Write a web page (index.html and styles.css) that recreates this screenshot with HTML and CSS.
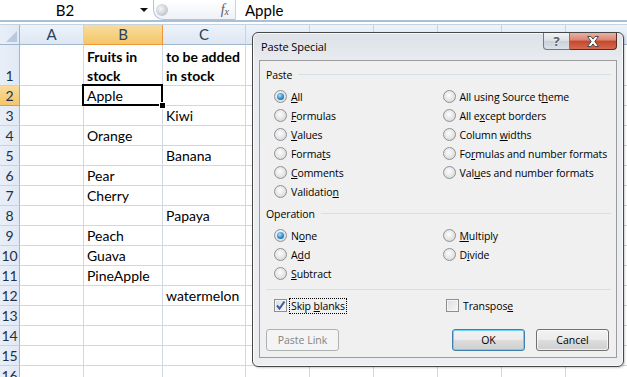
FILE: index.html
```
<!DOCTYPE html>
<html lang="en">
<head>
  <meta charset="UTF-8" />
  <title>Paste Special</title>
  <link rel="stylesheet" href="styles.css">
</head>
<body>
  <div class="formula-bar">
    <div class="name-box">B2</div>
    <div class="name-arrow"><span></span></div>
    <div class="fx-box">
      <span class="fx-knob"></span>
      <span class="fx"><i>f</i><sub>x</sub></span>
    </div>
    <div class="formula">Apple</div>
  </div>

  <div class="sheet">
    <div class="row head">
      <div class="rh corner"></div>
      <div class="ch a">A</div>
      <div class="ch b on">B</div>
      <div class="ch c">C</div>
      <div class="ch rest"></div>
    </div>
    <div class="row tall">
      <div class="rh">1</div>
      <div class="cell a"></div>
      <div class="cell b bold">Fruits in<br>stock</div>
      <div class="cell c bold">to be added<br>in stock</div>
      <div class="cell rest"></div>
    </div>
    <div class="row">
      <div class="rh on">2</div>
      <div class="cell a"></div>
      <div class="cell b sel">Apple</div>
      <div class="cell c"></div>
      <div class="cell rest"></div>
    </div>
    <div class="row">
      <div class="rh">3</div>
      <div class="cell a"></div>
      <div class="cell b"></div>
      <div class="cell c">Kiwi</div>
      <div class="cell rest"></div>
    </div>
    <div class="row">
      <div class="rh">4</div>
      <div class="cell a"></div>
      <div class="cell b">Orange</div>
      <div class="cell c"></div>
      <div class="cell rest"></div>
    </div>
    <div class="row">
      <div class="rh">5</div>
      <div class="cell a"></div>
      <div class="cell b"></div>
      <div class="cell c">Banana</div>
      <div class="cell rest"></div>
    </div>
    <div class="row">
      <div class="rh">6</div>
      <div class="cell a"></div>
      <div class="cell b">Pear</div>
      <div class="cell c"></div>
      <div class="cell rest"></div>
    </div>
    <div class="row">
      <div class="rh">7</div>
      <div class="cell a"></div>
      <div class="cell b">Cherry</div>
      <div class="cell c"></div>
      <div class="cell rest"></div>
    </div>
    <div class="row">
      <div class="rh">8</div>
      <div class="cell a"></div>
      <div class="cell b"></div>
      <div class="cell c">Papaya</div>
      <div class="cell rest"></div>
    </div>
    <div class="row">
      <div class="rh">9</div>
      <div class="cell a"></div>
      <div class="cell b">Peach</div>
      <div class="cell c"></div>
      <div class="cell rest"></div>
    </div>
    <div class="row">
      <div class="rh">10</div>
      <div class="cell a"></div>
      <div class="cell b">Guava</div>
      <div class="cell c"></div>
      <div class="cell rest"></div>
    </div>
    <div class="row">
      <div class="rh">11</div>
      <div class="cell a"></div>
      <div class="cell b">PineApple</div>
      <div class="cell c"></div>
      <div class="cell rest"></div>
    </div>
    <div class="row">
      <div class="rh">12</div>
      <div class="cell a"></div>
      <div class="cell b"></div>
      <div class="cell c">watermelon</div>
      <div class="cell rest"></div>
    </div>
    <div class="row">
      <div class="rh">13</div>
      <div class="cell a"></div>
      <div class="cell b"></div>
      <div class="cell c"></div>
      <div class="cell rest"></div>
    </div>
    <div class="row">
      <div class="rh">14</div>
      <div class="cell a"></div>
      <div class="cell b"></div>
      <div class="cell c"></div>
      <div class="cell rest"></div>
    </div>
    <div class="row">
      <div class="rh">15</div>
      <div class="cell a"></div>
      <div class="cell b"></div>
      <div class="cell c"></div>
      <div class="cell rest"></div>
    </div>
    <div class="row">
      <div class="rh">16</div>
      <div class="cell a"></div>
      <div class="cell b"></div>
      <div class="cell c"></div>
      <div class="cell rest"></div>
    </div>
  </div>

  <!-- Paste Special dialog floats over the sheet -->
  <div class="dialog">
    <div class="titlebar">
      <span class="title">Paste Special</span>
      <div class="caption">
        <span class="help">?</span>
        <span class="close">
          <svg width="14" height="11" viewBox="0 0 14 11">
            <path d="M1.5 0.5h3.5l2 2.6 2-2.6h3.5l-3.7 5 3.7 5h-3.5l-2-2.6-2 2.6h-3.5l3.7-5z" fill="#fff" stroke="#4b4b4b" stroke-width="1" stroke-linejoin="round"/>
          </svg>
        </span>
      </div>
    </div>

    <div class="panel">
      <div class="group-label"><span>Paste</span></div>
      <div class="opts">
        <div class="col">
          <div class="opt"><span class="radio on"></span><span><u>A</u>ll</span></div>
          <div class="opt"><span class="radio"></span><span><u>F</u>ormulas</span></div>
          <div class="opt"><span class="radio"></span><span><u>V</u>alues</span></div>
          <div class="opt"><span class="radio"></span><span>Forma<u>t</u>s</span></div>
          <div class="opt"><span class="radio"></span><span><u>C</u>omments</span></div>
          <div class="opt"><span class="radio"></span><span>Validatio<u>n</u></span></div>
        </div>
        <div class="col">
          <div class="opt"><span class="radio"></span><span>All using Source t<u>h</u>eme</span></div>
          <div class="opt"><span class="radio"></span><span>All e<u>x</u>cept borders</span></div>
          <div class="opt"><span class="radio"></span><span>Column <u>w</u>idths</span></div>
          <div class="opt"><span class="radio"></span><span>Fo<u>r</u>mulas and number formats</span></div>
          <div class="opt"><span class="radio"></span><span>Val<u>u</u>es and number formats</span></div>
        </div>
      </div>

      <div class="group-label"><span>Operation</span></div>
      <div class="opts">
        <div class="col">
          <div class="opt"><span class="radio on"></span><span>N<u>o</u>ne</span></div>
          <div class="opt"><span class="radio"></span><span>A<u>d</u>d</span></div>
          <div class="opt"><span class="radio"></span><span><u>S</u>ubtract</span></div>
        </div>
        <div class="col">
          <div class="opt"><span class="radio"></span><span><u>M</u>ultiply</span></div>
          <div class="opt"><span class="radio"></span><span>D<u>i</u>vide</span></div>
        </div>
      </div>

      <div class="divider"></div>

      <div class="opts checks">
        <div class="opt">
          <span class="check on">
            <svg width="11" height="11" viewBox="0 0 11 11"><path d="M2 5.5l2.5 3 5-7" fill="none" stroke="#3b5ba5" stroke-width="2"/></svg>
          </span>
          <span class="focus">Skip <u>b</u>lanks</span>
        </div>
        <div class="opt"><span class="check"></span><span>Transpos<u>e</u></span></div>
      </div>

      <div class="buttons">
        <button class="btn" disabled>Paste Link</button>
        <button class="btn default">OK</button>
        <button class="btn">Cancel</button>
      </div>
    </div>
  </div>
</body>
</html>
```
FILE: styles.css
```
body {
  margin: 0;
  width: 627px;
  height: 377px;
  overflow: hidden;
  position: relative;
  background: #fff;
  font-family: 'Lato', sans-serif;
  font-size: 14px;
  color: #000;
}

/* formula bar */
.formula-bar {
  display: flex;
  height: 20px;
  border-bottom: 2px solid #a9bfd6;
  margin-bottom: 2px;
}
.name-box {
  width: 130px;
  padding-right: 4px;
  text-align: center;
  line-height: 20px;
  font-size: 15px;
}
.name-arrow {
  width: 19px;
  display: flex;
  align-items: center;
  justify-content: center;
}
.name-arrow span {
  border-left: 4px solid transparent;
  border-right: 4px solid transparent;
  border-top: 4px solid #111;
}
.fx-box {
  width: 83px;
  height: 20px;
  box-sizing: border-box;
  border: 1px solid #b4c4d8;
  border-top: none;
  border-radius: 0 0 0 10px;
  border-right-color: #c9d3df;
  background: linear-gradient(#ffffff, #eef2f7);
  display: flex;
  align-items: center;
  justify-content: space-between;
  padding: 0 6px 0 2px;
}
.fx-knob {
  width: 12px;
  height: 12px;
  border-radius: 50%;
  background: radial-gradient(circle at 40% 40%, #f4f5f6, #c3c7cc 70%, #d9dce0);
}
.fx {
  font-family: 'Liberation Serif', serif;
  font-size: 14px;
  color: #5a5a5a;
}
.fx sub {
  font-size: 10px;
  font-style: italic;
  vertical-align: -1px;
}
.formula {
  padding-left: 9px;
  line-height: 20px;
  font-size: 15px;
}

/* sheet grid */
.sheet {
  border-top: 1px solid #c6d3e3;
}
.row {
  display: flex;
  height: 20px;
}
.row.tall {
  height: 41px;
}
.rh, .ch, .cell {
  box-sizing: border-box;
  border-right: 1px solid #d0d7e5;
  border-bottom: 1px solid #d0d7e5;
  flex: none;
}
.rh {
  width: 20px;
  background: linear-gradient(to right, #e9eff8, #e1e9f5);
  border-right-color: #9eb6ce;
  border-bottom-color: #c5d3e3;
  color: #1e2f47;
  line-height: 19px;
  display: flex;
  align-items: flex-end;
  justify-content: center;
}
.ch {
  background: linear-gradient(#eef3fa, #dde6f2);
  border-right-color: #c5d3e3;
  border-bottom-color: #9eb6ce;
  color: #27415f;
  text-align: center;
  font-size: 15px;
  line-height: 19px;
}
.rh.corner {
  position: relative;
  border-bottom-color: #9eb6ce;
}
.rh.corner::after {
  content: "";
  position: absolute;
  right: 2px;
  bottom: 2px;
  border-left: 11px solid transparent;
  border-bottom: 11px solid #b8c9dd;
}
.ch.on, .rh.on {
  background: linear-gradient(#f9dc9f, #f3c668);
  border-color: #f29536;
}
.a { width: 64px; }
.b { width: 79px; }
.c { width: 83px; }
.rest {
  flex: 1;
  border-right: none;
  background: repeating-linear-gradient(to right, transparent 0 63px, #d0d7e5 63px 64px);
}
.ch.rest {
  background: repeating-linear-gradient(to right, transparent 0 63px, #c5d3e3 63px 64px), linear-gradient(#eef3fa, #dde6f2);
}
.cell {
  display: flex;
  flex-direction: column;
  justify-content: flex-end;
  padding-left: 3px;
  line-height: 19px;
  white-space: nowrap;
}
.bold {
  font-weight: bold;
}
.cell.sel {
  position: relative;
  z-index: 1;
}
.cell.sel::before {
  content: "";
  position: absolute;
  top: -2px;
  left: -2px;
  right: -1px;
  bottom: -1px;
  border: 2px solid #000;
}
.cell.sel::after {
  content: "";
  position: absolute;
  right: -4px;
  bottom: -4px;
  width: 5px;
  height: 5px;
  background: #000;
  border: 1px solid #fff;
}

/* dialog */
.dialog {
  position: absolute;
  left: 252px;
  top: 32px;
  width: 372px;
  height: 335px;
  box-sizing: border-box;
  border: 1px solid #474747;
  border-radius: 6px;
  background: linear-gradient(#dde2e8, #e9ecf0 30px, #eceef1);
  box-shadow: inset 0 0 0 1px rgba(255, 255, 255, 0.75), 1px 1px 2px rgba(0, 0, 0, 0.2);
  padding: 0 6px 8px;
  display: flex;
  flex-direction: column;
  font-family: 'Open Sans', sans-serif;
  font-size: 10.5px;
  letter-spacing: -0.1px;
  color: #000;
}
.titlebar {
  height: 27px;
  display: flex;
  align-items: flex-start;
}
.title {
  padding-left: 2px;
  line-height: 27px;
  font-size: 11px;
}
.caption {
  margin-left: auto;
  display: flex;
}
.help, .close {
  height: 17px;
  box-sizing: border-box;
  display: flex;
  align-items: center;
  justify-content: center;
}
.help {
  width: 27px;
  border: 1px solid #707b88;
  border-top: none;
  border-radius: 0 0 0 4px;
  background: linear-gradient(#f1f3f6, #dadfe5 50%, #c9d0d8 50%, #dde2e7);
  color: #5b5f66;
  font-size: 13px;
  font-weight: bold;
  text-shadow: 0 0 2px #fff;
}
.close {
  width: 47px;
  border: 1px solid #5b2a20;
  border-top: none;
  border-left: none;
  border-radius: 0 0 4px 0;
  background: linear-gradient(#eab1a4, #d98571 45%, #c5472c 50%, #d46a50);
}
.panel {
  flex: 1;
  background: #f0f0f0;
  border: 1px solid #9c9c9c;
  padding: 6px 5px 5px 6px;
  display: flex;
  flex-direction: column;
}
.group-label {
  display: flex;
  align-items: center;
  height: 15px;
}
.group-label::after {
  content: "";
  flex: 1;
  height: 1px;
  margin-left: 6px;
  background: #d5dfe5;
}
.group-label + .opts {
  margin-top: 5px;
}
.opts + .group-label {
  margin-top: 5px;
}
.opts {
  display: flex;
  padding-left: 8px;
}
.col {
  width: 172px;
}
.opt {
  height: 19px;
  display: flex;
  align-items: center;
  white-space: nowrap;
}
.radio {
  width: 13px;
  height: 13px;
  margin-right: 4px;
  box-sizing: border-box;
  border-radius: 50%;
  border: 1px solid #8e9297;
  background: radial-gradient(circle at 45% 40%, #fdfdfd, #e2e2e2 60%, #cdcdcd);
  position: relative;
  flex: none;
}
.radio.on::after {
  content: "";
  position: absolute;
  inset: 2px;
  border-radius: 50%;
  background: radial-gradient(circle at 40% 35%, #a6e3fb, #2d8bd0 55%, #124f8c);
}
.divider {
  height: 1px;
  background: #d5dfe5;
  margin-top: 6px;
}
.opts.checks {
  margin-top: 6px;
}
.checks .opt:first-child {
  width: 172px;
}
.check {
  width: 13px;
  height: 13px;
  margin-right: 4px;
  box-sizing: border-box;
  border: 1px solid #8e8f8f;
  background: linear-gradient(135deg, #dcdcdc, #f8f8f8);
  box-shadow: inset 0 0 0 1px #f4f4f4;
  display: flex;
  align-items: center;
  justify-content: center;
  flex: none;
}
.focus {
  outline: 1px dotted #000;
  padding: 0 1px;
  margin-left: -1px;
}
.buttons {
  display: flex;
  margin-top: 14px;
  padding-right: 2px;
}
.btn {
  width: 73px;
  height: 22px;
  border: 1px solid #707070;
  border-radius: 3px;
  background: linear-gradient(#f2f2f2, #ebebeb 50%, #dddddd 50%, #cfcfcf);
  box-shadow: inset 0 0 0 1px rgba(255, 255, 255, 0.7);
  font-family: 'Open Sans', sans-serif;
  font-size: 10.5px;
  color: #000;
  padding: 0;
}
.btn:disabled {
  border-color: #adb2b5;
  background: #f4f4f4;
  box-shadow: none;
  color: #838383;
  margin-right: auto;
}
.btn.default {
  border-color: #3c7fb1;
  box-shadow: inset 0 0 0 1px #6fd0f5;
  margin-right: 11px;
}
```
